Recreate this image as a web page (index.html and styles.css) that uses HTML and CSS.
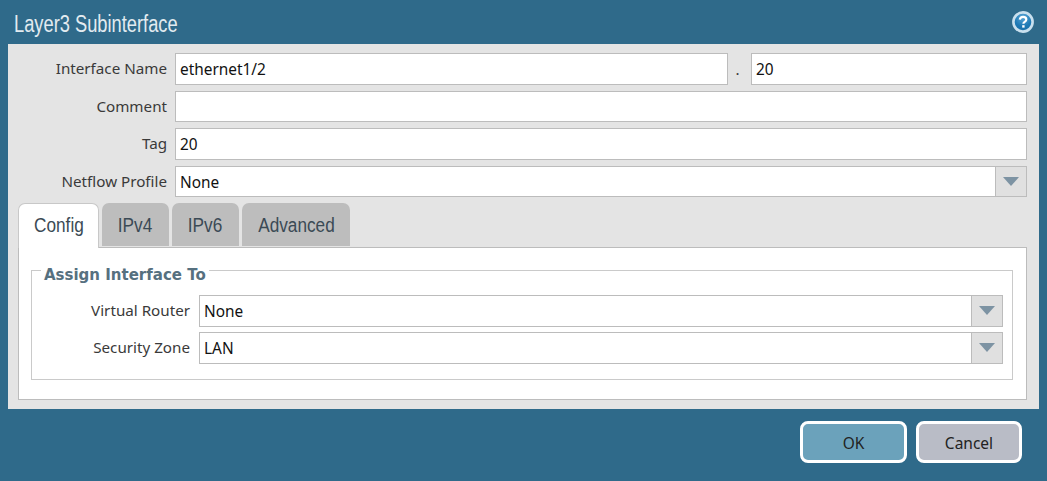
FILE: index.html
```html
<!DOCTYPE html>
<html lang="en">
<head>
<meta charset="UTF-8">
<title>Layer3 Subinterface</title>
<link rel="stylesheet" href="styles.css">
</head>
<body>
  <div class="dialog">
    <div class="titlebar">
      <span class="title">Layer3 Subinterface</span>
      <svg class="help" width="24" height="24" viewBox="0 0 24 24">
        <defs>
          <radialGradient id="helpfill" cx="50%" cy="25%" r="80%">
            <stop offset="0" stop-color="#5aa6d6"/>
            <stop offset="0.6" stop-color="#1c78b4"/>
            <stop offset="1" stop-color="#1a6ea6"/>
          </radialGradient>
        </defs>
        <circle cx="12" cy="12" r="9.6" fill="url(#helpfill)" stroke="#c9e0ee" stroke-width="2.6"/>
        <path d="M8.8 9.7c.2-1.9 1.4-2.9 3.3-2.9 2 0 3.2 1 3.2 2.6 0 1.2-.7 1.8-1.6 2.4-.9.6-1.3 1-1.3 1.9" fill="none" stroke="#fff" stroke-width="2.2"/>
        <rect x="11.2" y="15.2" width="2.4" height="2.4" fill="#fff"/>
      </svg>
    </div>

    <div class="panel">
      <div class="row">
        <label class="lbl">Interface Name</label>
        <div class="field grow">ethernet1/2</div>
        <span class="dot">.</span>
        <div class="field sub">20</div>
      </div>
      <div class="row">
        <label class="lbl">Comment</label>
        <div class="field grow"></div>
      </div>
      <div class="row">
        <label class="lbl">Tag</label>
        <div class="field grow">20</div>
      </div>
      <div class="row">
        <label class="lbl">Netflow Profile</label>
        <div class="select grow">
          <div class="select-val">None</div>
          <div class="select-btn"><span class="arrow"></span></div>
        </div>
      </div>

      <div class="tabs">
        <div class="tab active"><span class="tab-text">Config</span></div>
        <div class="tab tab-ip"><span class="tab-text">IPv4</span></div>
        <div class="tab tab-ip"><span class="tab-text">IPv6</span></div>
        <div class="tab tab-adv"><span class="tab-text">Advanced</span></div>
      </div>
      <div class="tab-body">
        <fieldset class="group">
          <legend>Assign Interface To</legend>
          <div class="row">
            <label class="lbl lbl-in">Virtual Router</label>
            <div class="select grow">
              <div class="select-val">None</div>
              <div class="select-btn"><span class="arrow"></span></div>
            </div>
          </div>
          <div class="row">
            <label class="lbl lbl-in">Security Zone</label>
            <div class="select grow">
              <div class="select-val">LAN</div>
              <div class="select-btn"><span class="arrow"></span></div>
            </div>
          </div>
        </fieldset>
      </div>
    </div>

    <div class="footer">
      <button class="btn btn-ok">OK</button>
      <button class="btn btn-cancel">Cancel</button>
    </div>
  </div>
</body>
</html>
```

FILE: styles.css
```css
* {
  box-sizing: border-box;
}
html, body {
  margin: 0;
  height: 100%;
}
body {
  background-color: #2f6a8a;
  font-family: "Noto Sans", "DejaVu Sans", sans-serif;
  font-size: 15.2px;
  color: #3a3a3a;
}
.dialog {
  width: 1047px;
  height: 481px;
  overflow: hidden;
}
.titlebar {
  height: 44px;
  display: flex;
  align-items: center;
  justify-content: space-between;
  padding: 0 12px 1px 14px;
}
.title {
  display: inline-block;
  margin-top: 5px;
  font-family: "Liberation Sans", sans-serif;
  font-size: 23px;
  color: #e2ebf0;
  transform: scaleX(0.795);
  transform-origin: left center;
}
.panel {
  margin: 0 8px;
  height: 365px;
  background-color: #e4e4e4;
  padding: 9px 12px 9px 10px;
}
.row {
  display: flex;
  align-items: center;
  height: 31.6px;
  margin-bottom: 6px;
}
.lbl {
  width: 149px;
  margin-right: 8px;
  padding-bottom: 1px;
  text-align: right;
  flex: none;
}
.lbl-in {
  width: 158px;
  margin-right: 9px;
  padding-bottom: 2px;
}
.field, .select {
  height: 100%;
  background-color: #fff;
  border: 1px solid #bcbcbc;
  font-size: 15.4px;
  color: #111;
}
.field {
  display: flex;
  align-items: center;
  padding: 1px 4px 0;
}
.grow {
  flex: 1;
}
.sub {
  width: 276px;
  flex: none;
}
.dot {
  width: 23px;
  padding-right: 4px;
  text-align: center;
  flex: none;
}
.select {
  display: flex;
}
.select-val {
  flex: 1;
  display: flex;
  align-items: center;
  padding: 1px 4px 0;
}
.select-btn {
  width: 31px;
  background-color: #e0e0e0;
  border-left: 1px solid #bcbcbc;
  display: flex;
  align-items: center;
  justify-content: center;
}
.arrow {
  width: 0;
  height: 0;
  border-left: 8px solid transparent;
  border-right: 8px solid transparent;
  border-top: 9px solid #7d93a3;
}
.tabs {
  display: flex;
  gap: 3px;
  height: 44px;
}
.tab {
  font-family: "Liberation Sans", sans-serif;
  font-size: 20px;
  color: #3b4a55;
  background-color: #bdbdbd;
  border-radius: 7px 7px 0 0;
  height: 43px;
  padding-top: 1px;
  display: flex;
  align-items: center;
  justify-content: center;
}
.tab-text {
  display: inline-block;
  transform: scaleX(0.86);
}
.tab.active {
  width: 81px;
  height: 45px;
  background-color: #fff;
  border: 1px solid #c8c8c8;
  border-bottom: none;
  padding: 0 0 2px;
  position: relative;
  z-index: 1;
}
.tab-ip {
  width: 67px;
}
.tab-adv {
  width: 108px;
}
.tab-body {
  height: 152.6px;
  background-color: #fff;
  border: 1px solid #bcbcbc;
  padding: 13px 13px 0 12px;
}
.group {
  margin: 0;
  height: 118.6px;
  padding: 15.6px 9px 0 0;
  border: 1px solid #cacaca;
}
.group .row {
  margin-bottom: 5.4px;
}
legend {
  margin-left: 9px;
  padding: 0 3px;
  font-family: "DejaVu Sans", sans-serif;
  font-weight: 700;
  color: #56707f;
  font-size: 15px;
  line-height: 18px;
  position: relative;
  top: 5px;
}
.footer {
  display: flex;
  justify-content: flex-end;
  gap: 9px;
  padding: 12px 25px 0 0;
}
.btn {
  height: 42px;
  padding: 2px 0 0;
  font-family: inherit;
  font-size: 15.5px;
  color: #222;
  border: 3px solid #fff;
  border-radius: 8px;
}
.btn-ok {
  width: 107px;
  background-color: #6ba2bb;
}
.btn-cancel {
  width: 106px;
  background-color: #b9bcc6;
}
```
